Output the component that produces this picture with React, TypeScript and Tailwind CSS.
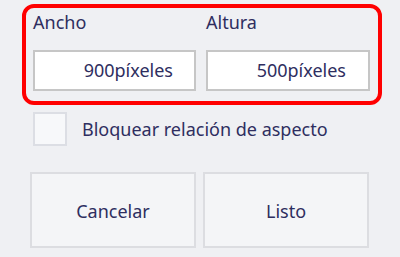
import React from "react";

export default function App() {
  const font = { fontFamily: '"Noto Sans", "Open Sans", sans-serif' };
  return (
    <div
      className="w-[400px] h-[257px] bg-[#eff0f3] text-[#2e2e60] overflow-hidden"
      style={font}
    >
      <div className="ml-[22px] mt-[4px] w-[360px] h-[101px] border-4 border-[#ff0000] rounded-[12px] pl-[7px] pr-[8px] pt-[2px] flex gap-[10px]">
        <div className="w-[163px] flex flex-col">
          <div className="h-[24px] leading-[24px] text-[18px]">Ancho</div>
          <div className="mt-[16px] h-[41px] bg-white border-2 border-[#c6c6c6] flex items-center justify-end pr-[21px] text-[18px]">
            900píxeles
          </div>
        </div>
        <div className="w-[164px] flex flex-col">
          <div className="h-[24px] leading-[24px] text-[18px]">Altura</div>
          <div className="mt-[16px] h-[41px] bg-white border-2 border-[#c6c6c6] flex items-center justify-end pr-[22px] text-[18px]">
            500píxeles
          </div>
        </div>
      </div>
      <div className="ml-[33px] mt-[7px] flex items-center gap-[15px]">
        <div className="w-[34px] h-[34px] bg-[#f7f8fa] border-2 border-[#dcdee4]" />
        <div className="text-[18px]">Bloquear relación de aspecto</div>
      </div>
      <div className="ml-[30px] mt-[26px] flex gap-[7px]">
        <div className="w-[166px] h-[76px] bg-[#f4f5f7] border-2 border-[#dcdde1] flex items-center justify-center text-[18px] pt-[2px]">
          Cancelar
        </div>
        <div className="w-[166px] h-[76px] bg-[#f4f5f7] border-2 border-[#dcdde1] flex items-center justify-center text-[18px] pt-[2px]">
          Listo
        </div>
      </div>
    </div>
  );
}
